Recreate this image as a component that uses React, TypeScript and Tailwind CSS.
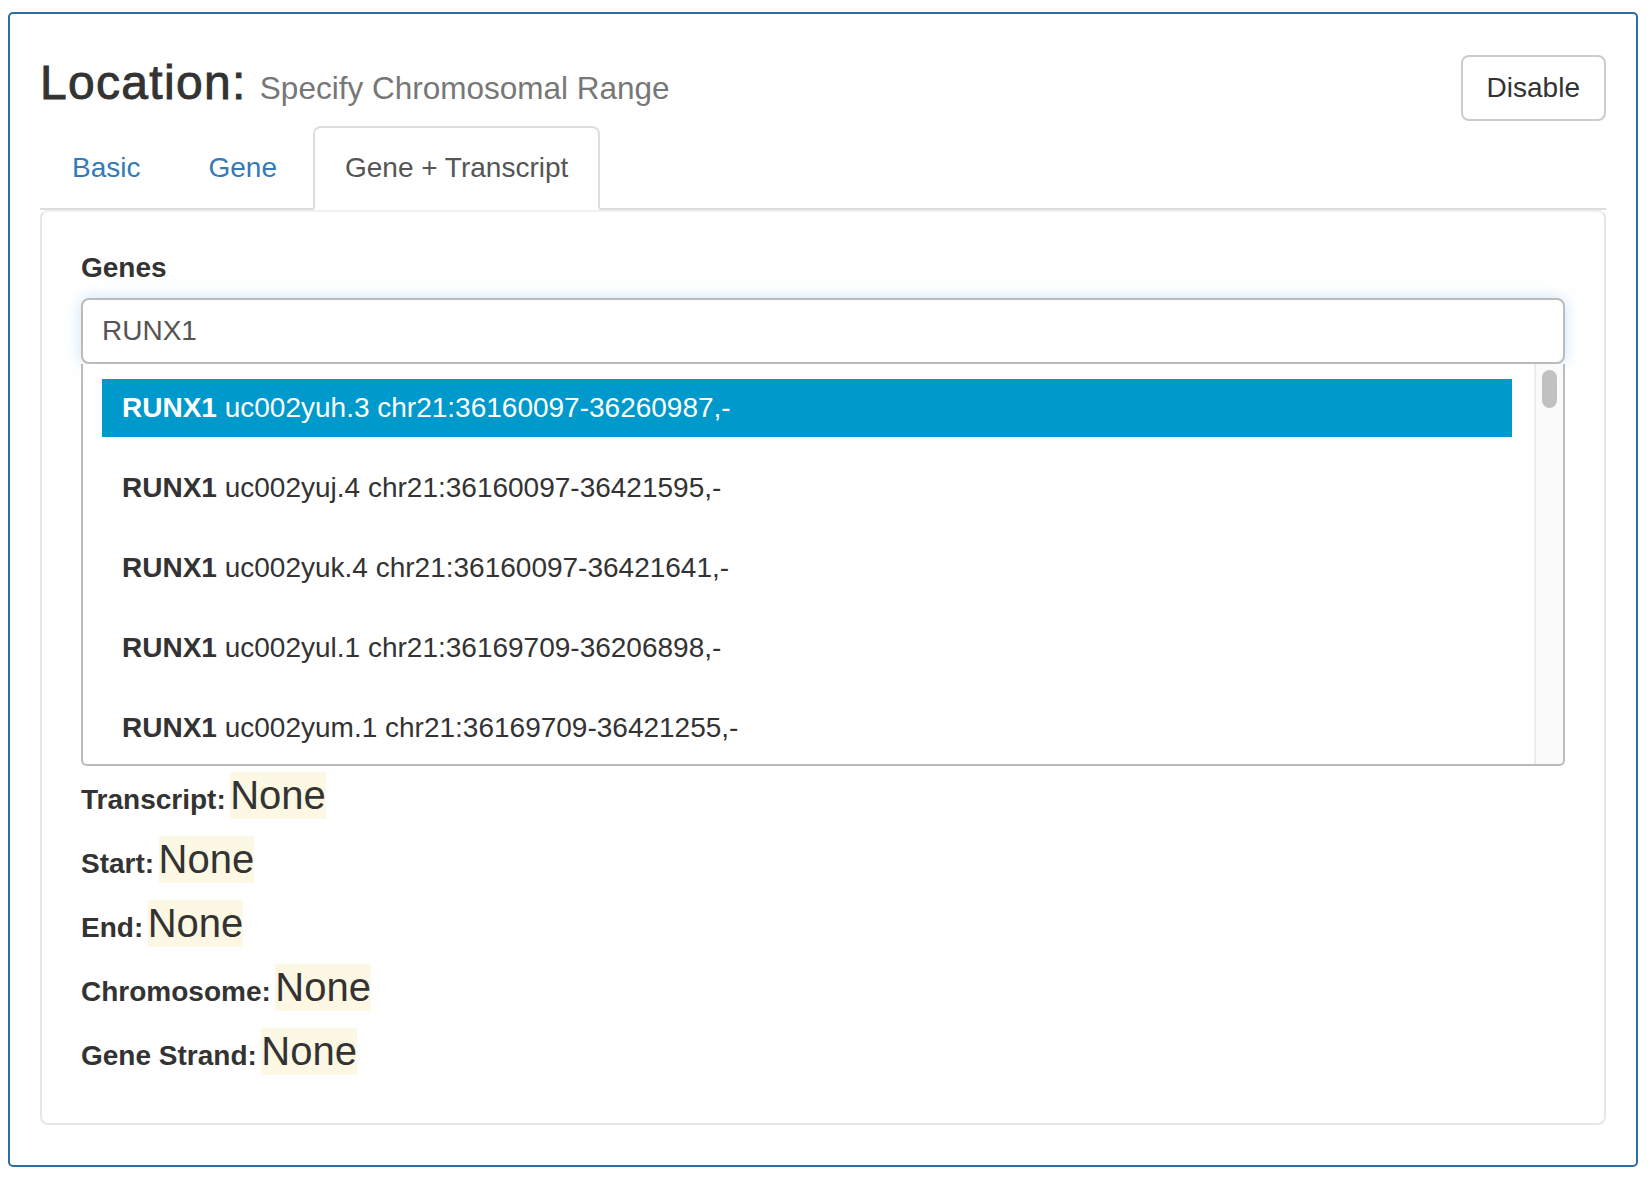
const transcripts = [
  { id: "uc002yuh.3", range: "chr21:36160097-36260987,-" },
  { id: "uc002yuj.4", range: "chr21:36160097-36421595,-" },
  { id: "uc002yuk.4", range: "chr21:36160097-36421641,-" },
  { id: "uc002yul.1", range: "chr21:36169709-36206898,-" },
  { id: "uc002yum.1", range: "chr21:36169709-36421255,-" },
];

const fields = ["Transcript", "Start", "End", "Chromosome", "Gene Strand"];

export default function App() {
  return (
    <div
      className="min-h-screen bg-white pl-[8px] pt-[12px] text-[#333]"
      style={{ fontFamily: '"Liberation Sans", Arial, sans-serif' }}
    >
      <div className="w-[1630px] rounded-[5px] border-2 border-[#2e6da4] px-[30px] pt-[41px] pb-[40px]">
        {/* header */}
        <div className="flex items-start justify-between">
          <h3 className="mt-[2px] text-[48px] leading-[52px] font-medium text-[#333]">
            <span className="tracking-[1.3px] [-webkit-text-stroke:0.9px_#333]">Location:</span>{" "}
            <small className="text-[31.5px] font-normal text-[#777]">
              Specify Chromosomal Range
            </small>
          </h3>
          <button className="h-[66px] rounded-[8px] border-2 border-[#ccc] bg-white px-[24px] text-[28px] leading-[40px] text-[#333]">
            Disable
          </button>
        </div>

        {/* tabs */}
        <ul className="mt-[5px] flex border-b-2 border-[#ddd]">
          <li className="-mb-[2px] mr-[4px]">
            <a className="block rounded-t-[8px] border-2 border-transparent px-[30px] py-[20px] text-[28px] leading-[40px] text-[#337ab7]">
              Basic
            </a>
          </li>
          <li className="-mb-[2px] mr-[4px]">
            <a className="block rounded-t-[8px] border-2 border-transparent px-[30px] py-[20px] text-[28px] leading-[40px] text-[#337ab7]">
              Gene
            </a>
          </li>
          <li className="-mb-[2px] mr-[4px]">
            <a className="block rounded-t-[8px] border-2 border-[#ddd] border-b-white bg-white px-[30px] py-[20px] text-[28px] leading-[40px] text-[#555]">
              Gene + Transcript
            </a>
          </li>
        </ul>

        {/* tab content */}
        <div className="rounded-[8px] border-2 border-[#e6e6e6] border-t-[#f0f0f0] px-[39px] pt-[36px] pb-[48px]">
          <label className="mb-[10px] block text-[28px] leading-[40px] font-bold text-[#333]">
            Genes
          </label>
          <div className="flex h-[66px] items-center rounded-[8px] border-2 border-[#bbb] bg-white px-[19px] text-[28px] text-[#555] shadow-[0_0_16px_rgba(102,175,233,0.35)]">
            RUNX1
          </div>

          {/* suggestions */}
          <div className="flex h-[402px] overflow-hidden rounded-b-[6px] border-2 border-t-0 border-[#bbb] bg-white">
            <ul className="flex flex-1 flex-col gap-[22px] pt-[15px] pl-[19px] pr-[22px]">
              {transcripts.map((t, i) => (
                <li
                  key={t.id}
                  className={
                    i === 0
                      ? "flex h-[58px] shrink-0 items-center bg-[#0099cc] px-[20px] text-[28px] text-white"
                      : "flex h-[58px] shrink-0 items-center px-[20px] text-[28px] text-[#333]"
                  }
                >
                  <b className="font-bold">RUNX1</b>&nbsp;{t.id} {t.range}
                </li>
              ))}
            </ul>
            <div className="flex w-[29px] shrink-0 justify-center border-l-2 border-[#ececec] bg-[#fafafa] pt-[6px]">
              <div className="h-[38px] w-[15px] rounded-full bg-[#c1c1c1]" />
            </div>
          </div>

          {/* details */}
          <div className="mt-[6px] flex flex-col gap-[17px]">
            {fields.map((f) => (
              <div key={f} className="h-[47px] leading-[47px]">
                <span className="text-[28px] font-bold text-[#333]">{f}:</span>{" "}
                <span className="inline-block bg-[#fcf8e3] text-[40px] leading-[47px] text-[#333]">
                  None
                </span>
              </div>
            ))}
          </div>
        </div>
      </div>
    </div>
  );
}
